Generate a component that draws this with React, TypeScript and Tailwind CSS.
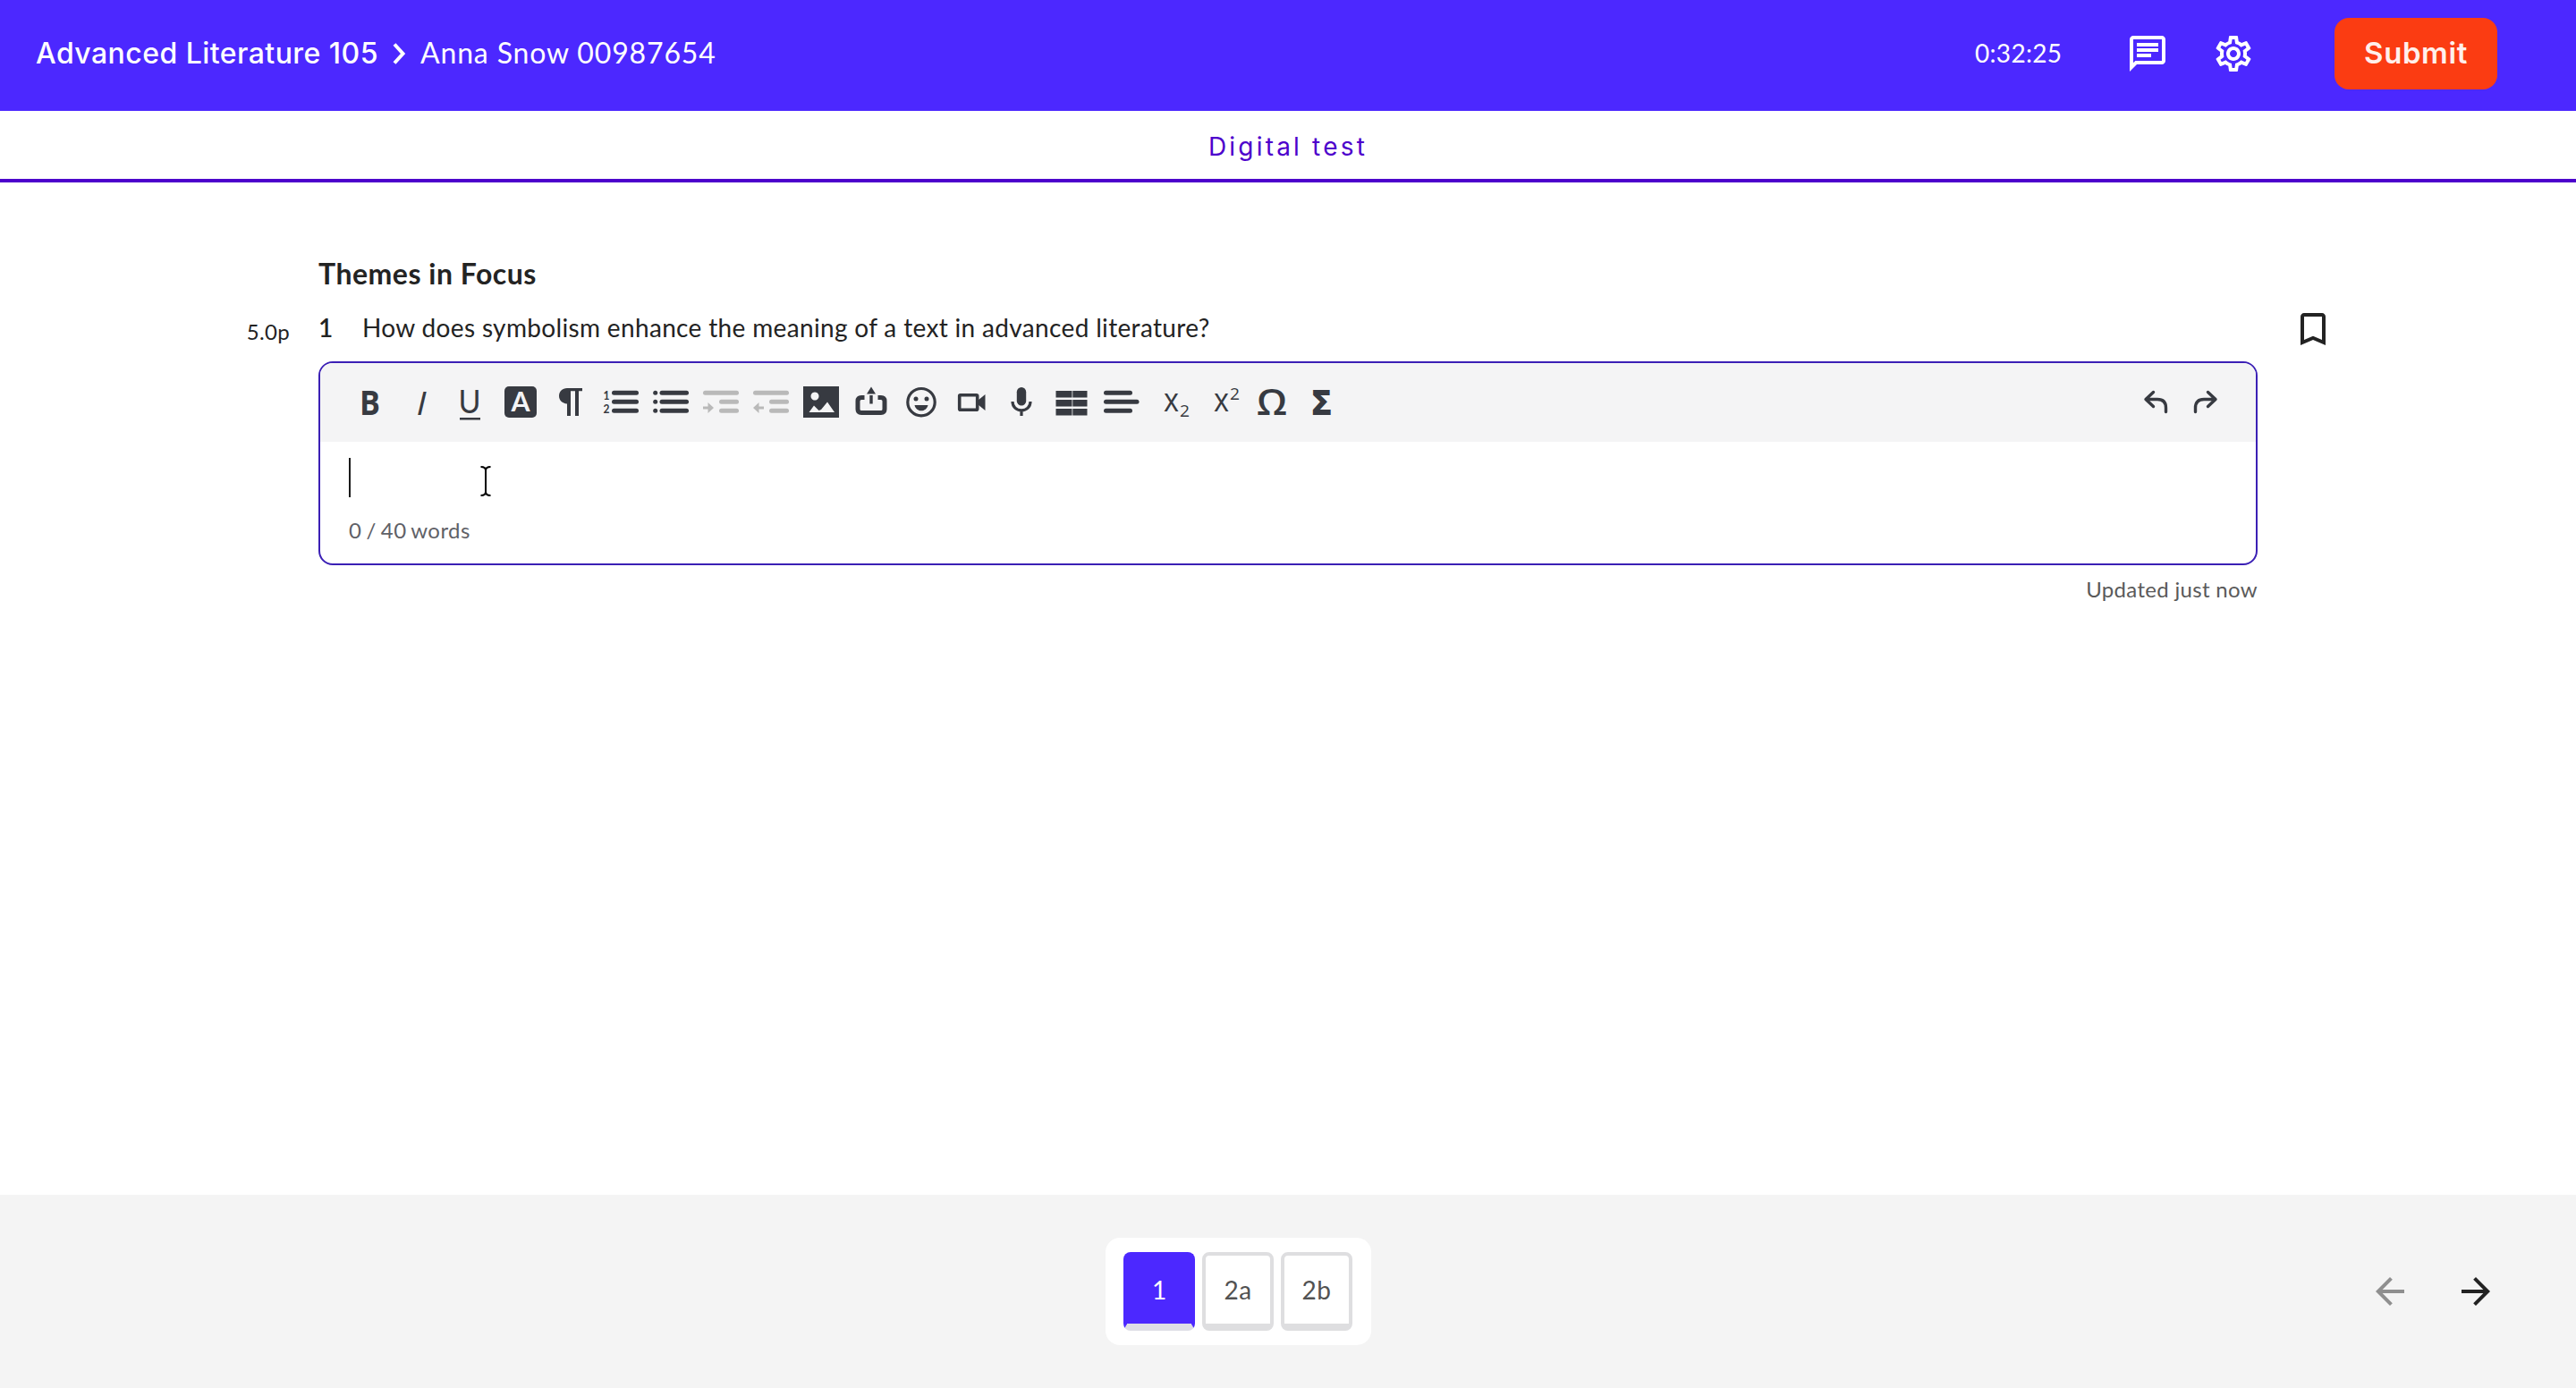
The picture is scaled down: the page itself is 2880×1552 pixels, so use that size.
import React, { useState } from "react";

interface ToolIconProps {
  label: string;
  children: React.ReactNode;
  disabled?: boolean;
}

interface GlyphProps {
  x: number;
  y: number;
  width: number;
  size: number;
  className?: string;
  children: string;
}

const ToolIcon: React.FC<ToolIconProps> = ({ label, children, disabled }) => (
  <button
    type="button"
    aria-label={label}
    disabled={disabled}
    className={
      disabled ? "size-14 shrink-0 text-[#b9b9b9]" : "size-14 shrink-0 text-[#373a41]"
    }
  >
    <svg viewBox="0 0 56 56" className="size-14" fill="currentColor">
      {children}
    </svg>
  </button>
);

const Glyph: React.FC<GlyphProps> = ({ x, y, width, size, className, children }) => (
  <text
    x={x}
    y={y}
    textLength={width}
    lengthAdjust="spacingAndGlyphs"
    fontSize={size}
    className={className}
  >
    {children}
  </text>
);

const Bars = ({ rows }: { rows: number[][] }) => (
  <g stroke="currentColor" strokeWidth="5" strokeLinecap="round">
    {rows.map(([x1, x2, y]) => (
      <line key={y} x1={x1 + 2.5} x2={x2 - 2.5} y1={y} y2={y} />
    ))}
  </g>
);

const Toolbar = () => (
  <div className="flex h-[88px] items-center justify-between rounded-t-[14px] bg-[#f4f4f5] px-7">
    <div className="flex">
      <ToolIcon label="Bold">
        <Glyph x={16} y={42} width={23} size={37} className="font-['Open_Sans'] font-bold">B</Glyph>
      </ToolIcon>
      <ToolIcon label="Italic">
        <Glyph x={23.5} y={42} width={11} size={37} className="font-['Open_Sans'] font-medium italic">I</Glyph>
      </ToolIcon>
      <ToolIcon label="Underline">
        <Glyph x={14.5} y={40} width={25} size={36}>U</Glyph>
        <rect x="16" y="45" width="23" height="2.5" />
      </ToolIcon>
      <ToolIcon label="Text color">
        <rect x="10" y="10" width="36" height="35" rx="5" />
        <Glyph x={17.5} y={38} width={21} size={31} className="fill-[#f4f4f5] font-bold">A</Glyph>
      </ToolIcon>
      <ToolIcon label="Paragraph">
        <path d="M24 12h17v3.2h-4V43h-4V15.200h-5V43h-4V29.500c-5.500-.5-9-4-9-8.700 0-5.200 3.700-8.800 9-8.800z" />
      </ToolIcon>
      <ToolIcon label="Numbered list">
        <Glyph x={8.5} y={25} width={7} size={13} className="font-bold">1</Glyph>
        <Glyph x={8.5} y={40} width={7} size={13} className="font-bold">2</Glyph>
        <Bars rows={[[18, 48, 17.3], [18, 48, 27.3], [18, 48, 37.3]]} />
      </ToolIcon>
      <ToolIcon label="Bulleted list">
        <circle cx="10.700" cy="17.300" r="2.500" />
        <circle cx="10.700" cy="27.300" r="2.500" />
        <circle cx="10.700" cy="37.300" r="2.500" />
        <Bars rows={[[15.5, 48, 17.3], [15.5, 48, 27.3], [15.5, 48, 37.3]]} />
      </ToolIcon>
      <ToolIcon label="Increase indent" disabled>
        <Bars rows={[[8, 48, 17.3], [26, 48, 27.3], [26, 48, 37.3]]} />
        <path d="M8 32.500h5.500V28l6.500 6-6.500 6v-4.500H8z" />
      </ToolIcon>
      <ToolIcon label="Decrease indent" disabled>
        <Bars rows={[[8, 48, 17.3], [26, 48, 27.3], [26, 48, 37.3]]} />
        <path d="M20 32.500h-5.500V28L8 34l6.500 6v-4.500H20z" />
      </ToolIcon>
      <ToolIcon label="Image">
        <path fillRule="evenodd" d="M8 10h40v35H8zM21 16.500a4.500 4.500 0 1 0 .01 0zM14.500 39h28.500l-8-11.500-7 8.500-2.500 1-5.500-5.500z" />
      </ToolIcon>
      <ToolIcon label="Upload">
        <path d="M20.500 22.500H17q-4 0-4 4V35.500q0 4 4 4h22q4 0 4-4V26.500q0-4-4-4h-3.500" fill="none" stroke="currentColor" strokeWidth="5" />
        <path d="M28 10.500l5 8h-10zM26.300 20h3.400v9.500h-3.400z" />
      </ToolIcon>
      <ToolIcon label="Emoji">
        <circle cx="28" cy="27.700" r="15.200" fill="none" stroke="currentColor" strokeWidth="3.200" />
        <circle cx="22" cy="24" r="2.500" />
        <circle cx="34" cy="24" r="2.500" />
        <path d="M20.500 31h15c-1 4-4 6.300-7.500 6.300s-6.500-2.300-7.500-6.300z" />
      </ToolIcon>
      <ToolIcon label="Video">
        <rect x="14.700" y="19.700" width="20" height="16.600" rx="1" fill="none" stroke="currentColor" strokeWidth="3.600" />
        <path d="M35.500 25.500l8-6.500v18l-8-6.500z" />
      </ToolIcon>
      <ToolIcon label="Audio">
        <rect x="22.800" y="11" width="10.400" height="20.500" rx="5.200" />
        <path d="M18 27c0 6 4.300 9.800 10 9.800S38 33 38 27M28 36.800V43" fill="none" stroke="currentColor" strokeWidth="3.200" />
      </ToolIcon>
      <ToolIcon label="Table">
        <path d="M10.500 15h18v7.400h-18zM29.300 15h16.200v7.400H29.300zM10.500 25h18v7.400h-18zM29.300 25h16.200v7.400H29.300zM10.500 35h18v7.600h-18zM29.300 35h16.200v7.600H29.300z" />
      </ToolIcon>
      <ToolIcon label="Align">
        <Bars rows={[[8, 40, 17.3], [8, 47.5, 27.3], [8, 40, 37.3]]} />
      </ToolIcon>
      <ToolIcon label="Subscript">
        <Glyph x={19} y={37.5} width={17} size={36} className="font-['Open_Sans']">x</Glyph>
        <Glyph x={37} y={44} width={11} size={19} className="font-['Open_Sans']">2</Glyph>
      </ToolIcon>
      <ToolIcon label="Superscript">
        <Glyph x={19} y={37.5} width={17} size={36} className="font-['Open_Sans']">x</Glyph>
        <Glyph x={37} y={24.5} width={11} size={19} className="font-['Open_Sans']">2</Glyph>
      </ToolIcon>
      <ToolIcon label="Special character">
        <Glyph x={11} y={42} width={34} size={40} className="font-['Open_Sans'] font-semibold">Ω</Glyph>
      </ToolIcon>
      <ToolIcon label="Formula">
        <Glyph x={16.5} y={42} width={22.5} size={38} className="font-['Open_Sans'] font-extrabold">Σ</Glyph>
      </ToolIcon>
    </div>
    <div className="flex">
      <ToolIcon label="Undo">
        <path d="M25.500 16.500L17 24.500l8.500 8M17 24.500h13q9.500 0 9.500 9.500v4.500" fill="none" stroke="currentColor" strokeWidth="3.400" strokeLinecap="round" strokeLinejoin="round" />
      </ToolIcon>
      <ToolIcon label="Redo">
        <path d="M30.500 16.500L39 24.500l-8.500 8M39 24.500H26q-9.500 0-9.500 9.500v4.500" fill="none" stroke="currentColor" strokeWidth="3.400" strokeLinecap="round" strokeLinejoin="round" />
      </ToolIcon>
    </div>
  </div>
);

const Header = () => (
  <header className="flex h-[124px] shrink-0 items-center justify-between bg-[#4c28ff] pr-[88px] pb-1 pl-10 text-white">
    <div className="flex items-center">
      <span className="w-[398px] font-['Inter'] text-[32px] leading-10 font-medium tracking-[0.45px] whitespace-nowrap">
        Advanced Literature 105
      </span>
      <svg viewBox="0 0 16 24" className="h-6 w-4" fill="none" stroke="currentColor" strokeWidth="4">
        <path d="M3 1.500L12.500 12 3 22.500" />
      </svg>
      <span className="mb-0.5 ml-4 text-[32px] leading-10 tracking-[0.85px] whitespace-nowrap">Anna Snow 00987654</span>
    </div>
    <div className="flex items-center">
      <span className="mb-0.5 w-[169px] text-[28px] leading-10 tracking-[0.3px]">0:32:25</span>
      <button type="button" aria-label="Messages" className="mr-12">
        <svg viewBox="0 0 24 24" className="size-12" fill="currentColor">
          <path d="M4 4h16v12H5.170L4 17.170V4m0-2c-1.100 0-1.990.9-1.990 2L2 22l4-4h14c1.100 0 2-.9 2-2V4c0-1.100-.9-2-2-2H4zm2 10h8v2H6v-2zm0-3h12v2H6V9zm0-3h12v2H6V6z" />
        </svg>
      </button>
      <button type="button" aria-label="Settings" className="mr-[89px]">
        <svg viewBox="0 0 24 24" className="size-12" fill="currentColor">
          <path d="M19.430 12.980c.04-.32.070-.64.070-.98 0-.34-.03-.66-.07-.98l2.110-1.650c.19-.15.240-.42.120-.64l-2-3.460c-.09-.16-.26-.25-.44-.25-.06 0-.12.010-.17.030l-2.490 1c-.52-.4-1.080-.73-1.690-.98l-.38-2.650C14.460 2.180 14.250 2 14 2h-4c-.25 0-.46.180-.49.420l-.38 2.650c-.61.250-1.170.59-1.690.98l-2.490-1c-.06-.02-.12-.03-.18-.03-.17 0-.34.090-.43.250l-2 3.460c-.13.220-.07.490.12.640l2.110 1.650c-.04.320-.07.650-.07.980 0 .33.030.66.070.98l-2.110 1.650c-.19.150-.24.420-.12.640l2 3.460c.09.160.26.250.44.250.06 0 .12-.01.170-.03l2.490-1c.52.400 1.080.73 1.690.98l.38 2.650c.03.240.24.420.49.420h4c.25 0 .46-.18.490-.42l.38-2.650c.61-.25 1.170-.59 1.690-.98l2.490 1c.06.020.12.030.18.030.17 0 .34-.09.430-.25l2-3.460c.12-.22.070-.49-.12-.64l-2.110-1.650zm-1.980-1.710c.04.310.05.520.05.730 0 .21-.02.430-.05.730l-.14 1.130.89.700 1.080.84-.7 1.210-1.270-.51-1.040-.42-.9.680c-.43.320-.84.560-1.250.730l-1.060.43-.16 1.130-.2 1.350h-1.400l-.19-1.350-.16-1.130-1.060-.43c-.43-.18-.83-.41-1.230-.71l-.91-.7-1.060.43-1.270.51-.7-1.210 1.080-.84.890-.7-.14-1.130c-.03-.31-.05-.54-.05-.74s.02-.43.050-.73l.14-1.130-.89-.7-1.080-.84.700-1.210 1.270.51 1.040.42.900-.68c.43-.32.840-.56 1.250-.73l1.060-.43.160-1.130.200-1.350h1.390l.19 1.350.16 1.130 1.060.43c.43.180.83.410 1.230.71l.91.700 1.060-.43 1.270-.51.700 1.210-1.070.85-.89.700.14 1.130zM12 8c-2.210 0-4 1.790-4 4s1.790 4 4 4 4-1.790 4-4-1.790-4-4-4zm0 6c-1.100 0-2-.9-2-2s.9-2 2-2 2 .9 2 2-.9 2-2 2z" />
        </svg>
      </button>
      <button type="button" className="h-20 w-[182px] rounded-2xl bg-[#fb3c12] font-['Inter'] text-[33px] font-semibold tracking-[0.6px] text-[#fff0ec]">
        Submit
      </button>
    </div>
  </header>
);

const questions = ["1", "2a", "2b"];

const App: React.FC = () => {
  const [active, setActive] = useState("1");

  return (
    <div className="flex h-[1552px] w-full flex-col bg-white font-['Lato',sans-serif] text-[#232323]">
      <Header />
      <div className="flex h-20 shrink-0 items-center justify-center border-b-4 border-[#4d00cc] pt-[3px] font-['Inter'] text-[28px] tracking-[3.2px] text-[#4d00cc]">
        Digital test
      </div>

      <main className="flex-1 px-[356px] pt-[82px]">
        <h1 className="text-[32px] leading-10 font-bold tracking-[0.5px]">Themes in Focus</h1>
        <div className="relative mt-5 flex h-10 items-center text-[28px]">
          <span className="absolute top-[5px] right-full mr-8 text-2xl leading-10 tracking-[0.3px]">5.0p</span>
          <span className="w-[49px] font-semibold">1</span>
          <span className="tracking-[0.34px] whitespace-nowrap">
            How does symbolism enhance the meaning of a text in advanced literature?
          </span>
          <button type="button" aria-label="Bookmark" className="absolute -top-0.5 -right-[86px]">
            <svg viewBox="0 0 24 24" className="size-12" fill="currentColor">
              <path d="M17 3H7c-1.100 0-1.990.9-1.990 2L5 21l7-3 7 3V5c0-1.100-.9-2-2-2zm0 15l-5-2.180L7 18V5h10v13z" />
            </svg>
          </button>
        </div>

        <section className="relative mt-[18px] h-[228px] rounded-2xl border-2 border-[#3b20b5]">
          <Toolbar />
          <div className="px-8 pt-[18px]">
            <div className="h-11 w-0.5 bg-[#1b1b1b]" />
            <p className="mt-[19px] text-2xl leading-9 tracking-[0.45px] text-[#5f6167] [word-spacing:-1.5px]">0 / 40 words</p>
          </div>
          <svg viewBox="0 0 14 36" className="absolute top-[114px] left-[178px] h-9 w-3.5" fill="none" stroke="black" strokeWidth="2">
            <path d="M1.500 2c3.500 0 5.500 1.500 5.500 4 0-2.500 2-4 5.500-4M7 5v26M1.500 34c3.500 0 5.500-1.500 5.500-4 0 2.500 2 4 5.500 4" />
          </svg>
        </section>
        <p className="mt-[9px] text-right text-2xl leading-9 tracking-[0.32px] text-[#5a5a5a]">Updated just now</p>
      </main>

      <footer className="flex h-[216px] shrink-0 items-center justify-between bg-[#f4f4f4] pr-[88px] pl-[1236px]">
        <div className="flex h-[120px] w-[297px] gap-2 rounded-2xl bg-white px-5 py-4">
          {questions.map((q) => (
            <button
              key={q}
              type="button"
              onClick={() => setActive(q)}
              className={
                q === active
                  ? "h-[88px] w-20 rounded-lg border-4 border-b-8 border-[#4c28ff] border-b-[#dedee6] bg-[#4c28ff] text-[28px] text-white"
                  : "h-[88px] w-20 rounded-lg border-4 border-b-8 border-[#dedee0] text-[28px] tracking-[0.5px] text-[#525252]"
              }
            >
              {q}
            </button>
          ))}
        </div>
        <div className="flex gap-12">
          <button type="button" aria-label="Previous" className="text-[#8f8f8f]">
            <svg viewBox="0 0 24 24" className="size-12" fill="currentColor">
              <path d="M20 11H7.830l5.590-5.590L12 4l-8 8 8 8 1.410-1.410L7.830 13H20v-2z" />
            </svg>
          </button>
          <button type="button" aria-label="Next" className="text-[#222222]">
            <svg viewBox="0 0 24 24" className="size-12" fill="currentColor">
              <path d="M12 4l-1.410 1.410L16.170 11H4v2h12.170l-5.580 5.590L12 20l8-8z" />
            </svg>
          </button>
        </div>
      </footer>
    </div>
  );
};

export default App;
